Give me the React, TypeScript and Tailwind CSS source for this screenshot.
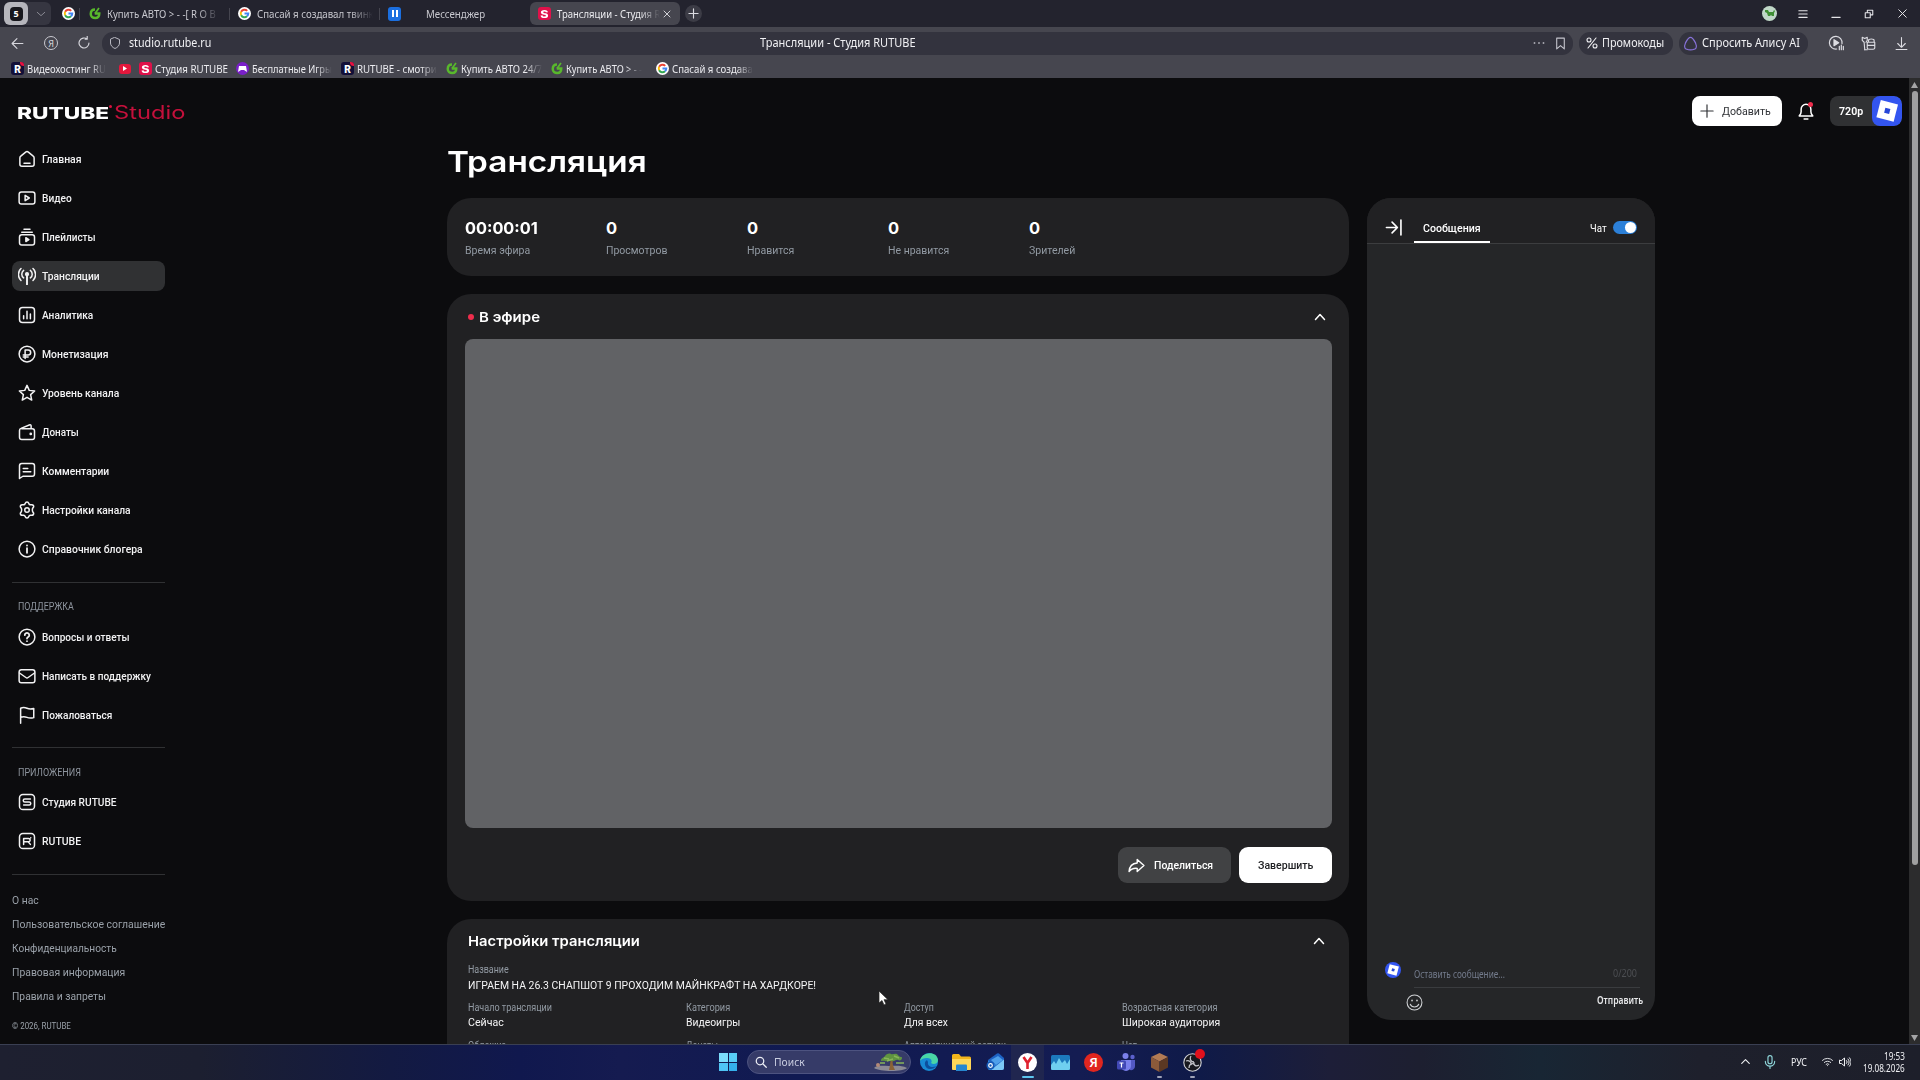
import { useLayoutEffect, useRef, useState, type ReactNode } from "react";

/* Single line of text stretched or condensed to an exact measure. */
function Fit({ w, className = "", children }: { w: number; className?: string; children: ReactNode }) {
  const ref = useRef<HTMLSpanElement>(null);
  const [scale, setScale] = useState(1);
  useLayoutEffect(() => {
    if (ref.current) setScale(w / ref.current.offsetWidth);
  }, [w]);
  return (
    <span className={"block shrink-0 whitespace-nowrap " + className} style={{ width: w }}>
      <span ref={ref} className="inline-block origin-left" style={{ transform: `scaleX(${scale})` }}>
        {children}
      </span>
    </span>
  );
}

function Svg({ size = 18, className = "", sw = 2, children }: { size?: number; className?: string; sw?: number; children: ReactNode }) {
  return (
    <svg width={size} height={size} viewBox="0 0 24 24" fill="none" stroke="currentColor" strokeWidth={sw} strokeLinecap="round" strokeLinejoin="round" className={"shrink-0 " + className}>
      {children}
    </svg>
  );
}

const Google = () => (
  <svg width="13" height="13" viewBox="0 0 24 24" className="shrink-0" fill="none">
    <circle cx="12" cy="12" r="12" fill="#fff" />
    <g strokeWidth="3.6">
      <path d="M17 7.2A7 7 0 0 0 5.8 8.8" stroke="#ea4335" />
      <path d="M5.8 8.8a7 7 0 0 0 0 6.4" stroke="#fbbc05" />
      <path d="M5.8 15.2A7 7 0 0 0 16.6 17.2" stroke="#34a853" />
      <path d="M12 12h7a7 7 0 0 1-2.4 5.2" stroke="#4285f4" />
    </g>
  </svg>
);

const GreenG = () => (
  <svg width="12" height="13" viewBox="0 0 24 24" className="shrink-0" fill="none" stroke="#58b82c" strokeWidth="5">
    <path d="M12 4C6 4 3.500 8 3.500 13c0 5 4 8 9 8s8-3.500 8-9h-9" />
    <path d="m12 12 8-11" strokeWidth="3.500" />
  </svg>
);

const RuIcon = () => (
  <span className="relative flex size-[13px] shrink-0 items-center justify-center overflow-hidden rounded-[3px] bg-[#120f38] font-[Inter] text-[10px] leading-none font-extrabold text-white">
    <span className="absolute -top-[3px] -right-[3px] size-[7px] rounded-full bg-[#e8103f]" />
    <span className="relative">R</span>
  </span>
);

const StudioIcon = () => (
  <span className="flex size-[13px] shrink-0 items-center justify-center rounded-[3px] bg-[#e0114a] font-[Inter] text-[10px] leading-none font-extrabold text-white">
    <span className="scale-x-125">S</span>
  </span>
);

const Roblox = ({ size }: { size: number }) => (
  <svg width={size} height={size} viewBox="0 0 30 30" className="shrink-0">
    <rect width="30" height="30" fill="#3355f0" />
    <path d="M8.800 4 26 8.400 21.600 25.700 4.400 21.300Z" fill="#fff" />
    <path d="M13.400 11.800 18.400 13.100 17.100 18 12.100 16.700Z" fill="#2747d8" />
  </svg>
);

const fade = "overflow-hidden [mask-image:linear-gradient(to_right,black_80%,transparent)]";

function TabStrip() {
  return (
    <div className="flex h-[27px] shrink-0 items-center bg-[#23232e] pl-1 text-[11.5px] leading-4 text-[#c8c8cf]">
      <div className="flex h-[23px] w-[47px] items-center rounded-[6px] bg-[#363641]">
        <div className="flex h-[23px] w-[24px] items-center justify-center rounded-[6px] bg-[#b5b5bc]">
          <span className="flex h-[14px] w-[13px] items-center justify-center rounded-[4px] bg-[#17171d] text-[9px] leading-none font-bold text-white">5</span>
        </div>
        <Svg size={10} className="ml-[8px] text-[#9a9aa4]"><path d="m3 8 9 8 9-8" /></Svg>
      </div>
      <div className="ml-[11px] flex"><Google /></div>
      <div className="ml-[4px] h-3 w-px bg-[#45454f]" />
      <div className="ml-[9px] flex"><GreenG /></div>
      <div className={"ml-[6px] w-[113px] " + fade}><Fit w={109}>Купить АВТО &gt; - -[ R O B</Fit></div>
      <div className="ml-[9px] h-3 w-px bg-[#45454f]" />
      <div className="ml-[8px] flex"><Google /></div>
      <div className={"ml-[6px] w-[116px] " + fade}><Fit w={117}>Спасай я создавал твинк</Fit></div>
      <div className="ml-[6px] h-3 w-px bg-[#45454f]" />
      <div className="ml-[8px] flex h-[14px] w-[13px] items-center justify-center gap-[2px] rounded-[3px] bg-[#1b6fe0]">
        <span className="h-[7px] w-[2px] bg-white" />
        <span className="h-[7px] w-[2px] bg-white" />
      </div>
      <Fit w={59} className="ml-[25px]">Мессенджер</Fit>
      <div className="ml-[45px] flex h-[23px] w-[150px] items-center rounded-[6px] bg-[#46464f] pl-[8px] text-[#ececf0]">
        <StudioIcon />
        <div className={"ml-[6px] w-[103px] " + fade}><Fit w={103}>Трансляции - Студия R</Fit></div>
        <Svg size={8} sw={2.500} className="ml-[3px]"><path d="m3 3 18 18M21 3 3 21" /></Svg>
      </div>
      <div className="ml-[5px] flex size-[17px] items-center justify-center rounded-full bg-[#3c3c46]">
        <Svg size={11} sw={2.500} className="text-[#dcdce2]"><path d="M12 2v20M2 12h20" /></Svg>
      </div>
      <div className="ml-auto flex items-center pr-[13px] text-[#e4e4e8]">
        <span className="flex size-[15px] items-center justify-center rounded-full bg-[#c0d8c8]">
          <svg width="10" height="7" viewBox="0 0 10 7"><path d="M0 0h3l1 2h4l1-2 1 1-1 2v3H7l-1-1-1 1H3L2 3 0 2Z" fill="#3f8f35" /></svg>
        </span>
        <Svg size={10} sw={2.600} className="ml-[21px]"><path d="M2 4h20M2 12h20M2 20h20" /></Svg>
        <Svg size={10} sw={2.600} className="ml-[23px]"><path d="M2 20h20" /></Svg>
        <Svg size={10} sw={2.600} className="ml-[23px]"><path d="M8 8V3h13v11h-5M3 9h12v12H3z" /></Svg>
        <Svg size={9} sw={2.600} className="ml-[24px]"><path d="m2 2 20 20M22 2 2 22" /></Svg>
      </div>
    </div>
  );
}

function Toolbar() {
  return (
    <div className="flex h-[32px] shrink-0 items-center text-[12px] leading-4 text-[#f0f0f3]">
      <Svg size={13} sw={2} className="ml-[11px] text-[#d6d6dc]"><path d="M22 12H2M11 3l-9 9 9 9" /></Svg>
      <span className="ml-[20px] flex size-[14px] items-center justify-center rounded-full border border-[#c9c9d0] text-[9px] leading-none text-[#d6d6dc]">Я</span>
      <Svg size={14} sw={2} className="ml-[19px] text-[#d6d6dc]"><path d="M20.500 12a8.500 8.500 0 1 1-3-6.500L14 5.500M17.500 0v5.500" /></Svg>
      <div className="ml-[11px] flex h-[23px] w-[1471px] items-center rounded-[11px] bg-[#33333e] pl-[7px]">
        <Svg size={12} sw={2} className="text-[#b9b9c2]"><path d="m12 1 9 4v7c0 5-4 9-9 11-5-2-9-6-9-11V5Z" /></Svg>
        <Fit w={82} className="ml-[8px]">studio.rutube.ru</Fit>
        <Fit w={156} className="ml-[549px]">Трансляции - Студия RUTUBE</Fit>
        <div className="ml-auto flex items-center pr-[6px]">
          <Svg size={12} sw={0} className="text-[#a9a9b2]"><g fill="currentColor"><circle cx="3" cy="12" r="1.900" /><circle cx="12" cy="12" r="1.900" /><circle cx="21" cy="12" r="1.900" /></g></Svg>
          <Svg size={13} sw={2} className="ml-[9px] text-[#c5c5cd]"><path d="M5 2h14v20l-7-6-7 6Z" /></Svg>
        </div>
      </div>
      <div className="ml-[6px] flex h-[23px] w-[94px] items-center rounded-[11px] bg-[#33333e] pl-[7px]">
        <Svg size={12} sw={2.200}><path d="M20 2 4 22" /><circle cx="6" cy="6" r="4" /><circle cx="18" cy="18" r="4" /></Svg>
        <Fit w={62} className="ml-[4px]">Промокоды</Fit>
      </div>
      <div className="ml-[6px] flex h-[23px] w-[129px] items-center rounded-[11px] bg-[#33333e] pl-[4px]">
        <Svg size={15} sw={2} className="text-[#8772d8]"><path d="M12 2c3 0 5 3 8 9 3 7 2 11-8 11S1 18 4 11c3-6 5-9 8-9Z" /></Svg>
        <Fit w={98} className="ml-[4px]">Спросить Алису AI</Fit>
      </div>
      <div className="ml-[20px] flex items-center text-[#dcdce2]">
        <Svg size={16} sw={1.800}><path d="M13 21A9.500 9.500 0 1 1 21 13M17 22v-5m3 5v-7m3 7v-5" /><path d="M9 7v9l7-4.500Z" fill="currentColor" /></Svg>
        <Svg size={15} sw={1.800} className="ml-[17px]"><path d="M6 22 5 10 2 7V2l4 2 4-2v5L8 10" /><path d="M12 7c0-3 9-3 9 0v3H12ZM10 10h12v9c0 3-12 3-12 0ZM10 15h12M6 22h4" /></Svg>
        <Svg size={13} sw={2} className="ml-[19px]"><path d="M12 1v17M5 12l7 7 7-7M2 23h20" /></Svg>
      </div>
    </div>
  );
}

function Bookmark({ icon, w, box, children }: { icon: ReactNode; w: number; box: string; children?: ReactNode }) {
  return (
    <div className={"flex shrink-0 items-center gap-[3px] " + box}>
      {icon}
      <div className={fade}><Fit w={w}>{children}</Fit></div>
    </div>
  );
}

function Bookmarks() {
  return (
    <div className="flex h-[19px] shrink-0 items-center pl-[11px] text-[11.5px] leading-4 text-[#ececf0]">
      <Bookmark icon={<RuIcon />} w={79} box="w-[95px]">Видеохостинг RU</Bookmark>
      <span className="ml-[13px] flex h-[10px] w-[12px] items-center justify-center rounded-[3px] bg-[#e5173c]">
        <svg width="4" height="5" viewBox="0 0 4 5"><path d="M0 0 4 2.500 0 5Z" fill="#fff" /></svg>
      </span>
      <div className="ml-[8px] flex w-[88px] items-center gap-[3px]"><StudioIcon /><Fit w={73}>Студия RUTUBE</Fit></div>
      <Bookmark
        icon={
          <span className="flex size-[13px] shrink-0 items-center justify-center rounded-full bg-[#7a1fc9]">
            <svg width="9" height="6" viewBox="0 0 9 6"><path d="M1 0h7l1 6L6 4H3L0 6Z" fill="#fff" /></svg>
          </span>
        }
        w={80}
        box="ml-[9px] w-[96px]"
      >
        Бесплатные Игры
      </Bookmark>
      <Bookmark icon={<RuIcon />} w={80} box="ml-[9px] w-[96px]">RUTUBE - смотри</Bookmark>
      <Bookmark icon={<GreenG />} w={81} box="ml-[9px] w-[97px]">Купить АВТО 24/7</Bookmark>
      <Bookmark icon={<GreenG />} w={76} box="ml-[8px] w-[97px]">Купить АВТО &gt; - -</Bookmark>
      <Bookmark icon={<Google />} w={81} box="ml-[8px] w-[97px]">Спасай я создава</Bookmark>
    </div>
  );
}

type Item = { label: string; w: number; icon: ReactNode; active?: boolean };

const mainNav: Item[] = [
  { label: "Главная", w: 40, icon: <><path d="M2.500 10.500c0-1 .4-1.700 1.200-2.300l6.500-5.400c1-.8 2.600-.8 3.600 0l6.500 5.400c.8.6 1.200 1.300 1.200 2.300V19c0 1.700-1 2.700-2.700 2.700H5.200c-1.700 0-2.700-1-2.700-2.700Z" /><path d="M8 17.500h8" /></> },
  { label: "Видео", w: 30, icon: <><rect x="1.500" y="4" width="21" height="16" rx="3" /><path d="M9.500 8.500v7l5.500-3.500Z" /></> },
  { label: "Плейлисты", w: 54, icon: <><rect x="2" y="9" width="20" height="13.500" rx="3" /><path d="M5 5.500h14M8 1.500h8" /><path d="m10.500 13v5l4-2.500Z" fill="currentColor" /></> },
  { label: "Трансляции", w: 58, active: true, icon: <><path d="M12 9v14" strokeWidth="2.600" /><circle cx="12" cy="9.500" r="1.800" fill="currentColor" /><path d="M7.500 14.500a6.300 6.300 0 0 1 0-10M16.500 14.500a6.300 6.300 0 0 0 0-10M4 18A11 11 0 0 1 4 2M20 18a11 11 0 0 0 0-16" /></> },
  { label: "Аналитика", w: 51, icon: <><rect x="2" y="2" width="20" height="20" rx="4" /><path d="M7.500 13v4M12 7v10M16.500 10.500V17" /></> },
  { label: "Монетизация", w: 66, icon: <><circle cx="12" cy="12" r="10.500" /><path d="M9.500 18V6.500h4a3.400 3.400 0 0 1 0 6.800H7M7 16h6.500" /></> },
  { label: "Уровень канала", w: 77, icon: <path d="m12 1.800 3 6.700 7.200.8-5.400 4.900 1.500 7.200L12 17.700l-6.300 3.700 1.500-7.200L1.800 9.300 9 8.500Z" /> },
  { label: "Донаты", w: 37, icon: <><path d="M5 7.500h14a3 3 0 0 1 3 3V19a3 3 0 0 1-3 3H5a3 3 0 0 1-3-3v-9a3 3 0 0 1 2-2.800l11-4.600c1.500-.6 2.500.2 2.500 1.500v3.300" /><circle cx="17" cy="14.500" r=".8" fill="currentColor" /></> },
  { label: "Комментарии", w: 67, icon: <><path d="M2 22V5a3 3 0 0 1 3-3h14a3 3 0 0 1 3 3v11a3 3 0 0 1-3 3H6.500Z" /><path d="M7 8.500h6M7 13h10" /></> },
  { label: "Настройки канала", w: 89, icon: <><path d="M12 1.200c1.200 0 2 .8 2.400 2.100.4 1.300 1.700 2 3 1.700 1.400-.3 2.500 0 3.100 1s.4 2.200-.6 3.200c-1 1-1 4.600 0 5.600 1 1 1.200 2.200.6 3.200s-1.700 1.300-3.100 1c-1.300-.3-2.600.4-3 1.700-.4 1.300-1.200 2.100-2.400 2.100s-2-.8-2.400-2.100c-.4-1.300-1.700-2-3-1.700-1.400.3-2.500 0-3.100-1s-.4-2.200.6-3.200c1-1 1-4.600 0-5.600-1-1-1.200-2.200-.6-3.200s1.700-1.300 3.100-1c1.300.3 2.600-.4 3-1.700.4-1.300 1.200-2.100 2.400-2.100Z" /><circle cx="12" cy="12" r="3" /></> },
  { label: "Справочник блогера", w: 101, icon: <><circle cx="12" cy="12" r="10.500" /><path d="M12 11v6M12 7.200v.2" strokeWidth="2.400" /></> },
];

const supportNav: Item[] = [
  { label: "Вопросы и ответы", w: 88, icon: <><circle cx="12" cy="12" r="10.500" /><path d="M9 9.500a3 3 0 1 1 4.500 2.600c-1 .6-1.500 1-1.500 2M12 17.500v.1" strokeWidth="2.300" /></> },
  { label: "Написать в поддержку", w: 109, icon: <><rect x="1.500" y="3.500" width="21" height="17.500" rx="3" /><path d="m2 8 8.500 6c1 .7 2 .7 3 0L22 8" /></> },
  { label: "Пожаловаться", w: 70, icon: <path d="M3.500 23V3c3-1.500 5.500-1.300 8.500 0s5.500 1.300 9 .3v12.200c-3.500 1-6 1-9-.3s-5.500-1.500-8.500 0" /> },
];

const appsNav: Item[] = [
  { label: "Студия RUTUBE", w: 75, icon: <><rect x="2" y="2" width="20" height="20" rx="4.500" /><path d="M16.500 8H9a2 2 0 0 0 0 4h6a2 2 0 0 1 0 4H7.500" /></> },
  { label: "RUTUBE", w: 39, icon: <><rect x="2" y="2" width="20" height="20" rx="4.500" /><path d="M7.500 16.500V8.500h6.500a2 2 0 0 1 0 4.500H8M13.500 13l3 3.500M17 7.500v.1" /></> },
];

function NavGroup({ items }: { items: Item[] }) {
  return (
    <nav className="flex flex-col gap-[9px]">
      {items.map((it) => (
        <div key={it.label} className={"flex h-[30px] items-center gap-[6px] rounded-[8px] pl-[6px] text-[11.5px] leading-4 font-medium text-[#f2f2f3] " + (it.active ? "bg-[#303133]" : "")}>
          <Svg size={18}>{it.icon}</Svg>
          <Fit w={it.w}>{it.label}</Fit>
        </div>
      ))}
    </nav>
  );
}

const footerLinks: [string, number][] = [
  ["О нас", 27],
  ["Пользовательское соглашение", 153],
  ["Конфиденциальность", 105],
  ["Правовая информация", 113],
  ["Правила и запреты", 94],
];

function Sidebar() {
  return (
    <aside className="flex w-[165px] shrink-0 flex-col pl-3">
      <div className="mt-[25px] ml-[5px] flex h-[20px] items-center font-[Inter] text-[16px] leading-5">
        <Fit w={92} className="font-extrabold text-white">RUTUBE</Fit>
        <span className="mb-[14px] size-[3px] shrink-0 rounded-full bg-[#d8133f]" />
        <Fit w={71} className="ml-[2px] text-[18px] text-[#c4103b]">Studio</Fit>
      </div>
      <div className="mt-[21px]"><NavGroup items={mainNav} /></div>
      <div className="mt-[18px] h-px bg-[#303133]" />
      <Fit w={56} className="mt-[16px] ml-[6px] text-[10px] leading-4 text-[#8e959e]">ПОДДЕРЖКА</Fit>
      <div className="mt-[7px]"><NavGroup items={supportNav} /></div>
      <div className="mt-[17px] h-px bg-[#303133]" />
      <Fit w={63} className="mt-[17px] ml-[6px] text-[10px] leading-4 text-[#8e959e]">ПРИЛОЖЕНИЯ</Fit>
      <div className="mt-[6px]"><NavGroup items={appsNav} /></div>
      <div className="mt-[18px] h-px bg-[#303133]" />
      <div className="mt-[17px] flex flex-col gap-2 text-[11.5px] leading-4 text-[#9aa1a9]">
        {footerLinks.map(([t, w]) => (
          <Fit key={t} w={w}>{t}</Fit>
        ))}
      </div>
      <Fit w={59} className="mt-[14px] text-[9px] leading-4 text-[#9aa1a9]">© 2026, RUTUBE</Fit>
    </aside>
  );
}

const stats: [string, number, string, number][] = [
  ["00:00:01", 73, "Время эфира", 65],
  ["0", 11, "Просмотров", 61],
  ["0", 11, "Нравится", 47],
  ["0", 11, "Не нравится", 61],
  ["0", 11, "Зрителей", 46],
];

const details: [string, number, string, number][] = [
  ["Начало трансляции", 84, "Сейчас", 36],
  ["Категория", 44, "Видеоигры", 54],
  ["Доступ", 30, "Для всех", 44],
  ["Возрастная категория", 95, "Широкая аудитория", 98],
];

const moreDetails: [string, number][] = [
  ["Обложка", 38],
  ["Донаты", 32],
  ["Автоматический запуск", 102],
  ["Чат", 15],
];

const Collapse = () => (
  <Svg size={12} sw={3} className="text-white"><path d="m3 17 9-10 9 10" /></Svg>
);

function Content() {
  return (
    <main className="ml-[282px] flex w-[902px] shrink-0 flex-col overflow-hidden">
      <Fit w={200} className="mt-[64px] font-[Inter] text-[28.5px] leading-10 font-semibold text-white">Трансляция</Fit>
      <section className="mt-[16px] flex h-[78px] shrink-0 rounded-[24px] bg-[#212123] pl-[18px]">
        {stats.map(([v, vw, l, lw]) => (
          <div key={l} className="flex w-[141px] flex-col pt-[20px]">
            <Fit w={vw} className="font-[Inter] text-[16.5px] leading-5 font-bold text-white">{v}</Fit>
            <Fit w={lw} className="mt-[5px] text-[11px] leading-4 text-[#929aa3]">{l}</Fit>
          </div>
        ))}
      </section>
      <section className="mt-[18px] flex h-[607px] shrink-0 flex-col rounded-[24px] bg-[#212123] pr-[17px] pl-[18px]">
        <div className="flex h-[45px] items-center pr-[6px]">
          <span className="ml-[3px] size-[6px] rounded-full bg-[#ee2d4c]" />
          <Fit w={61} className="ml-[5px] font-[Inter] text-[13.5px] leading-5 font-semibold text-white">В эфире</Fit>
          <div className="ml-auto"><Collapse /></div>
        </div>
        <div className="h-[489px] rounded-[8px] bg-[#616265]" />
        <div className="mt-[19px] flex justify-end gap-[8px] text-[11.5px] leading-4 font-medium">
          <button className="flex h-[36px] w-[113px] items-center rounded-[9px] bg-[#414244] pl-[10px] text-white">
            <Svg size={17}><path d="M13 3.500 22.500 12 13 20.500V16C7.500 15.500 4 17 1.500 20.500 2 14 6 9 13 8.500Z" /></Svg>
            <Fit w={59} className="ml-[9px]">Поделиться</Fit>
          </button>
          <button className="flex h-[36px] w-[93px] items-center justify-center rounded-[9px] bg-white text-[#202124]">
            <Fit w={55}>Завершить</Fit>
          </button>
        </div>
      </section>
      <section className="mt-[18px] flex h-[200px] shrink-0 flex-col rounded-[24px] bg-[#212123] px-[21px]">
        <div className="flex h-[44px] items-center pr-[3px]">
          <Fit w={172} className="font-[Inter] text-[13.5px] leading-5 font-semibold text-white">Настройки трансляции</Fit>
          <div className="ml-auto"><Collapse /></div>
        </div>
        <Fit w={41} className="text-[10px] leading-[14px] text-[#929aa3]">Название</Fit>
        <Fit w={348} className="text-[11.5px] leading-4 text-[#f4f4f5]">ИГРАЕМ НА 26.3 СНАПШОТ 9 ПРОХОДИМ МАЙНКРАФТ НА ХАРДКОРЕ!</Fit>
        <div className="mt-[8px] flex">
          {details.map(([l, lw, v, vw]) => (
            <div key={l} className="flex w-[218px] shrink-0 flex-col">
              <Fit w={lw} className="text-[10px] leading-[14px] text-[#929aa3]">{l}</Fit>
              <Fit w={vw} className="-mt-px text-[11.5px] leading-4 text-[#f4f4f5]">{v}</Fit>
            </div>
          ))}
        </div>
        <div className="mt-[9px] flex">
          {moreDetails.map(([l, lw]) => (
            <div key={l} className="w-[218px] shrink-0">
              <Fit w={lw} className="text-[10px] leading-[14px] text-[#929aa3]">{l}</Fit>
            </div>
          ))}
        </div>
      </section>
    </main>
  );
}

function Chat() {
  return (
    <section className="mt-[52px] flex h-[822px] w-[288px] shrink-0 flex-col overflow-hidden rounded-[24px] bg-[#252628]">
      <div className="flex h-[46px] shrink-0 items-center border-b border-[#3c3d3f] bg-[#212123] pt-[14px] text-[11.5px] leading-4 font-medium text-white">
        <Svg size={17} sw={2.300} className="ml-[18px]"><path d="M2 12h15M10 4.500l7.500 7.500-7.500 7.500M22.500 1.500v21" /></Svg>
        <div className="ml-[12px] flex h-full w-[76px] flex-col items-center justify-between">
          <Fit w={58} className="mt-[8px]">Сообщения</Fit>
          <div className="h-[2px] w-full bg-white" />
        </div>
        <Fit w={17} className="ml-auto font-normal">Чат</Fit>
        <div className="mr-[18px] ml-[6px] flex h-[13px] w-[24px] items-center justify-end rounded-full bg-[#2c80d8] pr-[1px]">
          <span className="size-[11px] rounded-full bg-white" />
        </div>
      </div>
      <div className="flex-1" />
      <div className="flex h-[64px] shrink-0 pl-[18px]">
        <div className="mt-[6px] flex size-[16px] overflow-hidden rounded-full"><Roblox size={16} /></div>
        <div className="ml-[13px] flex w-[230px] flex-col font-[Noto_Sans]">
          <div className="mt-[10px] flex h-[22px] w-[226px] border-b border-[#3a3c3f] pr-[3px]">
            <Fit w={91} className="text-[10.5px] leading-4 text-[#737b8c]">Оставить сообщение...</Fit>
            <Fit w={24} className="-mt-px ml-auto text-[10.5px] leading-4 text-[#4c4e52]">0/200</Fit>
          </div>
          <div className="mt-[4px] -ml-[8px] flex items-center text-[#cfd1d4]">
            <Svg size={17} sw={1.500}><circle cx="12" cy="12" r="10.500" /><path d="M6 14.500c2 5 10 5 12 0" /><path d="M8.500 8.800v.6M15.500 8.800v.6" strokeWidth="2.300" /></Svg>
            <Fit w={46} className="mr-px mb-[5px] ml-auto text-[10px] leading-4 font-semibold text-[#e6e7e9]">Отправить</Fit>
          </div>
        </div>
      </div>
    </section>
  );
}

function AccountBar() {
  return (
    <div className="absolute top-[18px] right-[18px] flex items-center">
      <button className="flex h-[30px] w-[90px] items-center rounded-[8px] bg-white pl-[8px] text-[11.5px] leading-4 text-[#303236]">
        <Svg size={14} sw={2}><path d="M12 1.500v21M1.500 12h21" /></Svg>
        <Fit w={49} className="ml-[8px]">Добавить</Fit>
      </button>
      <div className="relative ml-[15px] text-white">
        <Svg size={18}><path d="M3 18.500h18c-1.500-1.500-2.500-3-2.500-5.500V9.500a6.500 6.500 0 0 0-13 0V13c0 2.500-1 4-2.500 5.500ZM9.500 22.500h5" /></Svg>
        <span className="absolute top-0 right-[2px] size-[5px] rounded-full bg-[#ee2d4c]" />
      </div>
      <div className="ml-[15px] flex h-[30px] w-[72px] items-center justify-end overflow-hidden rounded-[8px] bg-[#303133] text-[11.5px] leading-4 font-semibold text-white">
        <Fit w={24} className="mr-[9px]">720p</Fit>
        <div className="flex overflow-hidden rounded-[8px]"><Roblox size={30} /></div>
      </div>
    </div>
  );
}

function Scrollbar() {
  return (
    <div className="ml-auto flex w-[11px] shrink-0 flex-col items-center bg-[#2c2c2d] text-[#a5a5a6]">
      <svg width="7" height="6" viewBox="0 0 7 6" className="mt-[4px]"><path d="M3.500 0 7 6H0Z" fill="currentColor" /></svg>
      <div className="mt-[3px] h-[774px] w-[6px] rounded-full bg-[#a0a0a0]" />
      <svg width="7" height="6" viewBox="0 0 7 6" className="mt-auto mb-[3px]"><path d="M3.500 6 7 0H0Z" fill="currentColor" /></svg>
    </div>
  );
}

const slot = "flex h-[35px] w-[33px] shrink-0 items-center justify-center pb-px";

function Taskbar() {
  return (
    <div className="flex h-[36px] shrink-0 items-center border-t border-[#3a3f52] bg-[linear-gradient(to_right,#1e2030_0,#1c1f30_200px,#131a42_390px,#10184e_520px,#151b50_620px,#101a52_800px,#141c52_1080px,#0f1a48_1200px,#1d1e38_1330px,#1d1f30_1420px,#182634_1540px,#1e202c_1700px,#1d1f2a_1920px)] pl-[716px]">
      <div className="mr-[7px] flex h-[32px] w-[24px] items-center justify-center pb-px">
        <div className="grid grid-cols-2 gap-px">
          <span className="size-[8.500px] bg-[#7bdcfb]" /><span className="size-[8.500px] bg-[#58cdf6]" />
          <span className="size-[8.500px] bg-[#4fc4f4]" /><span className="size-[8.500px] bg-[#35b1ec]" />
        </div>
      </div>
      <div className="mb-px flex h-[24px] w-[164px] items-center rounded-full border border-[#4d5380] bg-[#363b68] pl-[7px]">
        <Svg size={12} sw={2.500} className="text-[#eceef5]"><circle cx="10" cy="10" r="7.500" /><path d="m16 16 6.500 6.500" /></Svg>
        <Fit w={31} className="ml-[7px] text-[11px] leading-4 text-[#c9cde0]">Поиск</Fit>
        <svg width="38" height="21" viewBox="0 0 36 21" className="ml-auto">
          <path d="M1 16c3-3 9-2 15-2s12-1 18 2c-4 4-27 4-33 0Z" fill="#8b8a95" />
          <path d="M16 18c1-4 1-7 2-11l2 1c-1 3 0 6 2 10Z" fill="#8a6236" />
          <path d="M8 8c1-3 3-2 4-4s4-3 6-2 5-2 7 1 4 1 4 3-2 3-4 2-4 2-6 1-5 1-7 0-4 1-4-1Z" fill="#5f9440" />
          <path d="M7 11h5M23 11h8M11 6l5 1M21 4l5 2M14 9l6-2" stroke="#87b558" strokeWidth="1.500" />
          <circle cx="5" cy="13" r="2" fill="#b48a76" />
        </svg>
      </div>
      <div className={slot + " ml-[1px]"}>
        <svg width="18" height="18" viewBox="0 0 18 18">
          <circle cx="9" cy="9" r="9" fill="#1789d3" />
          <path d="M0 8C1-1 17-3 18 7c0 4-5 5-7 3 2-3-1-5-4-5S1 6 0 8Z" fill="#49d6a5" />
          <path d="M7 7c-4 2-2 9 3 9 3 0 5-1 6-3-3 2-9 1-8-4Z" fill="#0d4f9c" />
        </svg>
      </div>
      <div className={slot}>
        <svg width="19" height="17" viewBox="0 0 19 17"><path d="M0 1.500Q0 0 1.500 0H7l2 2.500h8.500q1.500 0 1.500 1.500v11.500H0Z" fill="#f3b51c" /><path d="M0 5h19v9.500Q19 16 17.500 16h-16Q0 16 0 14.500Z" fill="#ffd758" /><path d="M4 11.500q0-1 1-1h9q1 0 1 1V17H4Z" fill="#2787cf" /></svg>
      </div>
      <div className={slot}>
        <svg width="18" height="18" viewBox="0 0 18 18"><path d="M2 7 11 .500q1-.5 2 0L18 5v10q0 2-2 2H4q-2 0-2-2Z" fill="#1d62c4" /><path d="M5 7 12 3l5 4-7 5Z" fill="#4fa0ea" /><path d="M18 6.500V15q0 2-2 2H5Z" fill="#7cc8f7" /><path d="m2 8 8 4-6 5q-2 0-2-2Z" fill="#3f9be8" /><circle cx="4.500" cy="12.500" r="4" fill="#1559b5" /><circle cx="4.500" cy="12.500" r="1.800" fill="none" stroke="#fff" strokeWidth="1.200" /></svg>
      </div>
      <div className={slot + " relative bg-[#20264f]"}>
        <svg width="19" height="19" viewBox="0 0 19 19"><circle cx="9.500" cy="9.500" r="9.500" fill="#fff" /><path d="m5.500 4 4 6v6m4-12-4 6" fill="none" stroke="#e0222f" strokeWidth="2.600" /></svg>
        <span className="absolute bottom-[2px] h-[2px] w-[12px] rounded-full bg-[#5cc5ee]" />
      </div>
      <div className={slot}>
        <svg width="19" height="15" viewBox="0 0 19 15"><rect width="19" height="15" rx="1.500" fill="#1c79bd" /><path d="M0 10 3 6l2 3 3-6 3 5 3-3 2 4 3-5v9.500q0 1.500-1.500 1.500h-16Q0 15 0 13.500Z" fill="#6fd0f0" /></svg>
      </div>
      <div className={slot}>
        <span className="flex size-[19px] items-center justify-center rounded-full bg-[#e0261f] text-[13px] leading-none font-semibold text-white">Я</span>
      </div>
      <div className={slot}>
        <svg width="19" height="18" viewBox="0 0 19 18"><circle cx="8.500" cy="3" r="3" fill="#7b80ea" /><circle cx="15.500" cy="4" r="2.200" fill="#5b60cc" /><path d="M12 7h6v6a4 4 0 0 1-5 4Z" fill="#5258c4" /><path d="M4 7h10v6a5 5 0 0 1-10 0Z" fill="#7a80ec" /><rect y="7.500" width="9" height="9" rx="1.500" fill="#4148b5" /><path d="M2.500 10h4M4.500 10v4.500" stroke="#fff" strokeWidth="1.200" /></svg>
      </div>
      <div className={slot + " relative"}>
        <svg width="17" height="19" viewBox="0 0 17 19"><path d="M8.500 0 17 4 8.500 8.500 0 4Z" fill="#b27b54" /><path d="M0 4l8.500 4.500V19L0 14.500Z" fill="#8c5a3a" /><path d="M17 4 8.500 8.500V19l8.500-4.500Z" fill="#5b3823" /></svg>
        <span className="absolute bottom-[2px] h-[2px] w-[5px] rounded-full bg-[#9fa3b8]" />
      </div>
      <div className={slot + " relative"}>
        <svg width="19" height="19" viewBox="0 0 19 19"><circle cx="9.500" cy="9.500" r="8.700" fill="#17181e" stroke="#d3d4d9" strokeWidth="1.100" /><g fill="none" stroke="#c3c4ca" strokeWidth="1.300"><path d="M8 3c-2 3 0 6 3 6" /><path d="M16 12c-3 2-6 0-5-3" /><path d="M6 15c0-4 3-5 5-4" /><path d="M3 8c3-1 6 1 5 4" /></g></svg>
        <span className="absolute top-[4px] right-[4px] size-[10px] rounded-full bg-[#e0101c]" />
        <span className="absolute bottom-[2px] h-[2px] w-[5px] rounded-full bg-[#9fa3b8]" />
      </div>
      <div className="mb-[2px] ml-auto flex items-center pr-[15px] text-[10.5px] leading-[14px] text-[#f0f1f4]">
        <Svg size={9} sw={3}><path d="m2 17 10-10 10 10" /></Svg>
        <Svg size={14} sw={2} className="ml-[13px] text-[#8fd6da]"><rect x="8.500" y="1" width="7" height="14" rx="3.500" /><path d="M4 11a8 8 0 0 0 16 0M12 19v4" /></Svg>
        <Fit w={16} className="ml-[14px]">РУС</Fit>
        <Svg size={11} sw={2} className="ml-[15px]"><path d="M1 9.500a15.500 15.500 0 0 1 22 0M5 14a10 10 0 0 1 14 0M9 18a4.500 4.500 0 0 1 6 0M12 21v.1" /></Svg>
        <Svg size={12} sw={2} className="ml-[6px]"><path d="M1 9v6h4l6 5V4L5 9ZM15 9a4 4 0 0 1 0 6M18 6a8.500 8.500 0 0 1 0 12M21 3.500a12 12 0 0 1 0 17" /></Svg>
        <div className="ml-[12px] flex flex-col items-end">
          <Fit w={21}>19:53</Fit>
          <Fit w={42} className="-mt-[2px]">19.08.2026</Fit>
        </div>
      </div>
    </div>
  );
}

export default function App() {
  return (
    <div className="relative flex h-[1080px] w-[1920px] flex-col overflow-hidden bg-[#0c0c0e] font-[Noto_Sans,sans-serif]">
      <TabStrip />
      <div className="flex h-[51px] shrink-0 flex-col bg-[#46464f]">
        <Toolbar />
        <Bookmarks />
      </div>
      <div className="relative flex h-[966px] shrink-0 overflow-hidden font-[Roboto,sans-serif]">
        <Sidebar />
        <Content />
        <div className="ml-[18px] flex pt-[68px]"><Chat /></div>
        <Scrollbar />
        <AccountBar />
      </div>
      <Taskbar />
      <svg width="11" height="16" viewBox="0 0 11 16" className="absolute top-[990px] left-[878px]">
        <path d="M1 1v12l3-2.500 2 4.500 2-1-2-4.300h4Z" fill="#fff" stroke="#222" strokeWidth=".7" />
      </svg>
    </div>
  );
}
